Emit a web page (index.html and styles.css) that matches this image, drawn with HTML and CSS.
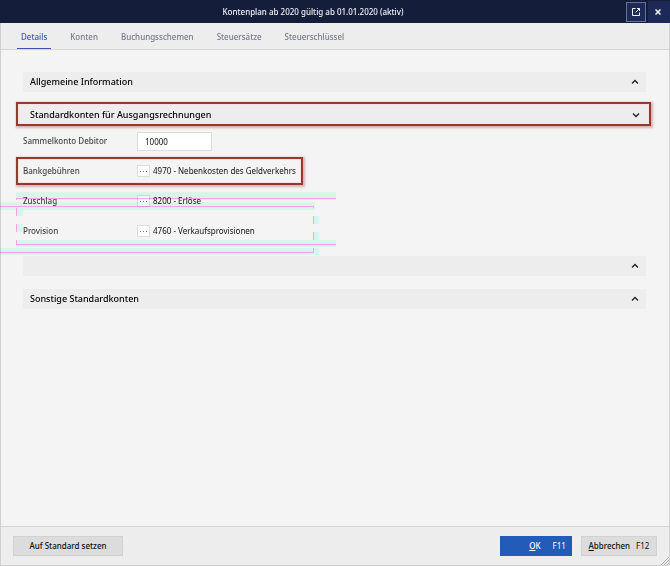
FILE: index.html
```html
<!DOCTYPE html>
<html lang="de">
<head>
<meta charset="utf-8">
<title>Kontenplan</title>
<link rel="stylesheet" href="styles.css">
</head>
<body>
<div class="dialog">
  <header class="titlebar">
    <h1 class="title">Kontenplan ab 2020 gültig ab 01.01.2020 (aktiv)</h1>
    <button class="window-button framed" aria-label="In neuem Fenster öffnen">
      <svg width="10" height="10" viewBox="0 0 10 10" fill="none" stroke="currentColor"><path d="M4.500 1.500H1.500v7h7V5.500M6 1.500h2.500V4M8.500 1.500L4.500 5.500"/></svg>
    </button>
    <button class="window-button" aria-label="Schließen">
      <svg width="6" height="6" viewBox="0 0 6 6" fill="none" stroke="currentColor" stroke-width="1.5"><path d="M.5.5l5 5M5.500.5l-5 5"/></svg>
    </button>
  </header>
  <nav class="tabs">
    <a class="tab active" href="#details">Details</a>
    <a class="tab" href="#konten">Konten</a>
    <a class="tab" href="#buchungsschemen">Buchungsschemen</a>
    <a class="tab" href="#steuersaetze">Steuersätze</a>
    <a class="tab" href="#steuerschluessel">Steuerschlüssel</a>
  </nav>
  <main class="content">
    <button class="section">Allgemeine Information
      <svg class="chevron" width="8" height="6" viewBox="0 0 8 6"><path d="M1 4.500l3-3 3 3"/></svg>
    </button>
    <button class="section marked">Standardkonten für Ausgangsrechnungen
      <svg class="chevron" width="8" height="6" viewBox="0 0 8 6"><path d="M1 1.500l3 3 3-3"/></svg>
    </button>
    <div class="fields">
      <div class="row">
        <label class="label" for="debitor">Sammelkonto Debitor</label>
        <input class="number" id="debitor" value="10000">
      </div>
      <div class="row marked-row">
        <span class="label">Bankgebühren</span>
        <button class="pick" aria-label="Bankgebühren wählen"><i></i><i></i><i></i></button>
        <span class="value">4970 - Nebenkosten des Geldverkehrs</span>
      </div>
      <div class="row">
        <span class="label">Zuschlag</span>
        <button class="pick" aria-label="Zuschlag wählen"><i></i><i></i><i></i></button>
        <span class="value">8200 - Erlöse</span>
      </div>
      <div class="row">
        <span class="label">Provision</span>
        <button class="pick" aria-label="Provision wählen"><i></i><i></i><i></i></button>
        <span class="value">4760 - Verkaufsprovisionen</span>
      </div>
      <svg class="traces" width="336" height="66" viewBox="0 0 336 66" shape-rendering="crispEdges">
        <path class="glow" d="M16 2H336V10H16zM0 12H315V20H0zM16 50H336V57H16zM0 58H319V65H0zM17 20h6v6h-6zM17 34h6v8h-6zM314 26h5v8h-5zM314 42h5v8h-5z"/>
        <path class="line" d="M16 8H336V9H16zM0 16H314V17H0zM16 54H336V55H16zM0 62H314V63H0zM16 8h1v2h-1zM16 18h1v8h-1zM16 34h1v8h-1zM16 50h1v5h-1zM313 16h1v2h-1zM313 26h1v8h-1zM313 42h1v8h-1zM313 58h1v5h-1z"/>
      </svg>
    </div>
    <button class="section" aria-label="Weitere Konten">
      <svg class="chevron" width="8" height="6" viewBox="0 0 8 6"><path d="M1 4.500l3-3 3 3"/></svg>
    </button>
    <button class="section">Sonstige Standardkonten
      <svg class="chevron" width="8" height="6" viewBox="0 0 8 6"><path d="M1 4.500l3-3 3 3"/></svg>
    </button>
  </main>
  <footer class="footer">
    <button class="button reset">Auf Standard setzen</button>
    <button class="button primary"><span><u>O</u>K</span><kbd>F11</kbd></button>
    <button class="button cancel"><span><u>A</u>bbrechen</span><kbd>F12</kbd></button>
    <svg class="grip" width="8" height="8" viewBox="0 0 8 8"><path d="M0 8l8-8M3 8l5-5M6 8l2-2"/></svg>
  </footer>
</div>
</body>
</html>
```

FILE: styles.css
```css
* { box-sizing: border-box; }
body {
  margin: 0;
  font: 8px/14px "Noto Sans", sans-serif;
  color: #101010;
}
button, input, kbd { font: inherit; color: inherit; }
button { border: 0; padding: 0; background: none; }
.dialog {
  min-height: 100vh;
  display: flex;
  flex-direction: column;
  background: #f4f4f4;
  border: solid #d0d0d0;
  border-width: 0 1px 1px;
}
.titlebar {
  display: flex;
  align-items: center;
  justify-content: flex-end;
  height: 23px;
  margin: 0 -1px;
  background: #141e3b;
  color: #f2f4f8;
  position: relative;
}
.title {
  position: absolute;
  inset: 0 44px 0 0;
  margin: 0;
  text-align: center;
  font-size: 8px;
  line-height: 23px;
  font-weight: 500;
}
.window-button {
  position: relative;
  display: grid;
  place-items: center;
  width: 22px;
  height: 22px;
  padding-right: 2px;
  background: #1d2a57;
}
.window-button.framed {
  width: 20px;
  height: 20px;
  margin-right: 2px;
  padding: 0;
  border: 1px solid #66719a;
}
.tabs {
  display: flex;
  gap: 15px;
  height: 27px;
  padding: 0 16px;
  background: #ededed;
  border-bottom: 1px solid #d6d6d6;
}
.tab {
  padding: 0 4px;
  line-height: 27px;
  font-weight: 500;
  color: #747a8c;
  text-decoration: none;
}
.tab.active {
  color: #4053b4;
  border-bottom: 1px solid #4053b4;
}
.content { flex: 1; padding: 22px 23px 22px 22px; }
.section {
  display: flex;
  align-items: center;
  width: 100%;
  height: 20px;
  margin-bottom: 13px;
  padding: 0 7px;
  background: #ededed;
  font-size: 9px;
  font-weight: 500;
  color: #000;
}
.chevron {
  margin-left: auto;
  fill: none;
  stroke: #202020;
  stroke-width: 1.3;
}
.marked, .marked-row {
  border: 2px solid #933c2e;
  box-shadow: 1px 1px 2px 1px #d8b3b3, inset 0 0 1px 1px #f9dfe4;
}
.marked {
  width: auto;
  min-width: calc(100% + 12px);
  height: 24px;
  margin: -3px -5px 0 -7px;
  padding: 2px 9px 0 12px;
}
.fields { position: relative; margin-bottom: 10px; }
.row { display: flex; align-items: center; height: 30px; }
.marked-row {
  width: fit-content;
  height: 28px;
  margin: 1px 0 1px -7px;
  padding: 0 5px;
}
.label { width: 114px; color: #444; font-weight: 500; }
.number {
  width: 75px;
  height: 19px;
  padding: 0 7px;
  border: 1px solid #ddd;
  background: #fff;
}
.pick {
  display: flex;
  align-items: center;
  justify-content: center;
  gap: 2px;
  width: 13px;
  height: 12px;
  margin-right: 3px;
  border: 1px solid #ddd;
  background: #fff;
}
.pick i { width: 1px; height: 1px; background: #777; }
.traces {
  position: absolute;
  left: -23px;
  top: 64px;
  pointer-events: none;
  mix-blend-mode: multiply;
}
.glow { fill: #e2fff8; }
.line { fill: #ffaaf0; }
.footer {
  position: relative;
  display: flex;
  align-items: center;
  gap: 9px;
  height: 39px;
  padding: 0 12px;
  background: #ededed;
  border-top: 1px solid #d6d6d6;
}
.button {
  display: flex;
  align-items: center;
  justify-content: center;
  height: 20px;
  background: #dcdcdc;
  border: 1px solid #d2d2d2;
  font-weight: 500;
}
.button kbd { font-weight: 400; }
.reset { width: 110px; margin-right: auto; }
.primary { width: 72px; background: #235bb9; border-color: #235bb9; color: #fff; gap: 12px; padding-left: 23px; }
.cancel { width: 76px; gap: 6px; }
.grip { position: absolute; right: 0; bottom: 0; stroke: #aaa; }
```
